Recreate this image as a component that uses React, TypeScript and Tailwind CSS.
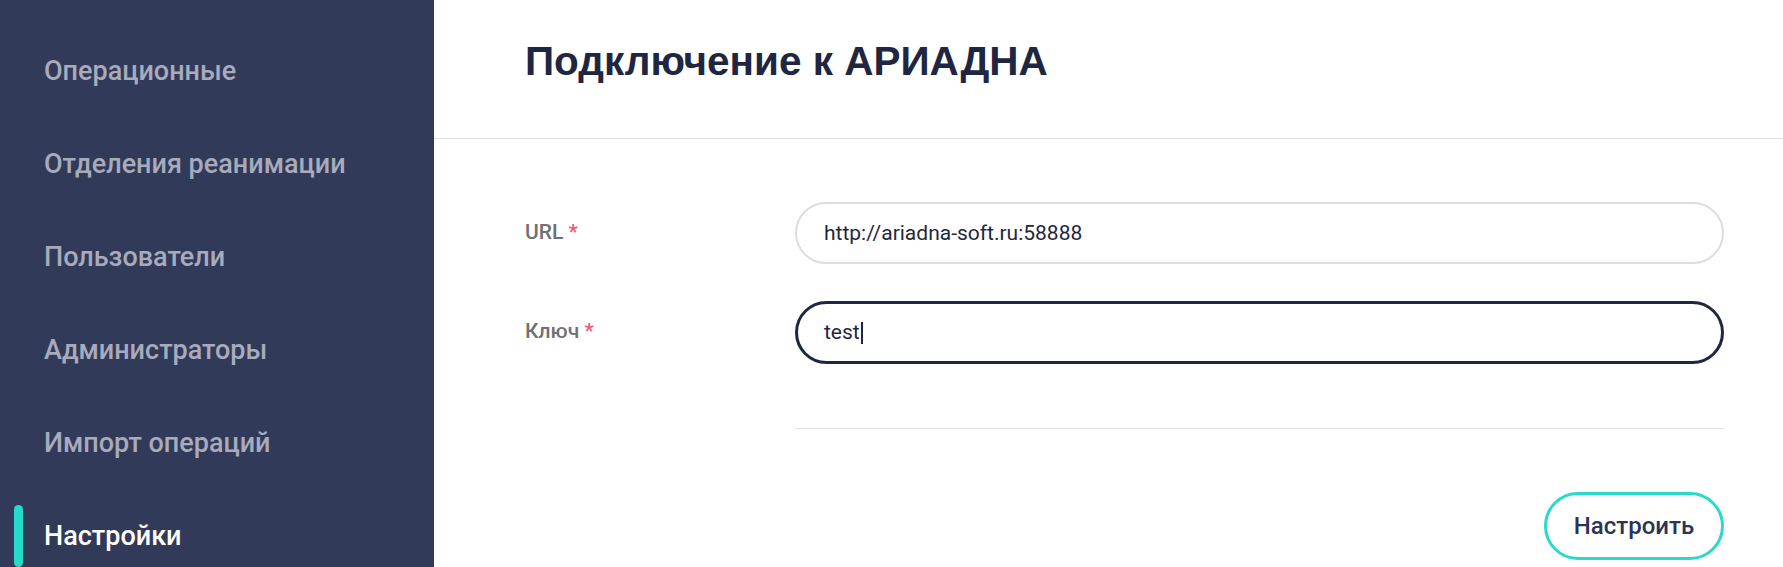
import React from "react";

const items = [
  "Операционные",
  "Отделения реанимации",
  "Пользователи",
  "Администраторы",
  "Импорт операций",
  "Настройки",
];

export default function App() {
  return (
    <div className="flex h-[567px] w-full overflow-hidden bg-white font-['Roboto',sans-serif]">
      <aside className="w-[434px] shrink-0 bg-[#323a5a] pt-[25px]">
        {items.map((t, i) => {
          const active = i === items.length - 1;
          return (
            <div key={t} className="relative flex h-[93px] items-center pl-[44px]">
              {active && (
                <span className="absolute left-[14px] top-[15px] h-[62px] w-[9px] rounded-full bg-[#26dac9]" />
              )}
              <span
                className={
                  active
                    ? "text-[27px] leading-[27px] font-medium text-white"
                    : "text-[27px] leading-[27px] font-medium text-[#a7abbb]"
                }
              >
                {t}
              </span>
            </div>
          );
        })}
      </aside>
      <main className="flex min-w-0 flex-1 flex-col">
        <header className="h-[139px] border-b border-[#e2e2e2] pl-[91px] pt-[41px]">
          <h1 className="font-['Liberation_Sans',Arial,sans-serif] text-[40.5px] leading-[41px] font-bold text-[#1f2641]">
            Подключение к АРИАДНА
          </h1>
        </header>
        <section className="flex flex-col pl-[91px] pr-[59px] pt-[63px]">
          <div className="flex items-start">
            <label className="mt-[20px] w-[270px] shrink-0 text-[21px] leading-[21px] font-medium text-[#6f6f74]">
              URL <span className="text-[#f2557a]">*</span>
            </label>
            <div className="flex h-[62px] flex-1 items-center rounded-full border-2 border-[#dcdde1] pl-[27px] text-[21px] leading-[21px] text-[#1f2740]">
              http://ariadna-soft.ru:58888
            </div>
          </div>
          <div className="mt-[37px] flex items-start">
            <label className="mt-[20px] w-[270px] shrink-0 text-[21px] leading-[21px] font-medium text-[#6f6f74]">
              Ключ <span className="text-[#f2557a]">*</span>
            </label>
            <div className="flex h-[63px] flex-1 items-center rounded-full border-[3px] border-[#1f2740] pl-[26px] text-[21px] leading-[21px] text-[#1f2740]">
              test
              <span className="ml-[1px] inline-block h-[22px] w-[2px] bg-[#1f2740]" />
            </div>
          </div>
          <div className="ml-[270px] mt-[64px] h-px bg-[#e0e0e0]" />
          <div className="mt-[63px] flex justify-end">
            <button className="flex h-[68px] w-[180px] items-center justify-center rounded-full border-[3px] border-[#2bd9c9] bg-white text-[24px] leading-[24px] font-medium text-[#2c3454]">
              Настроить
            </button>
          </div>
        </section>
      </main>
    </div>
  );
}
